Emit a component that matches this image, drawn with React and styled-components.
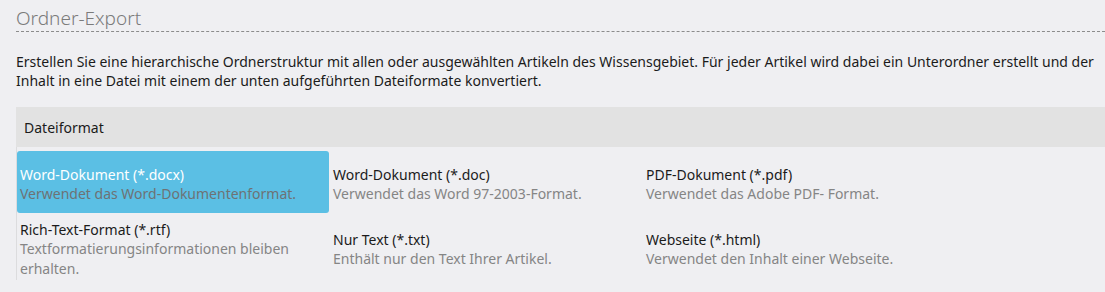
import React from "react";
import styled, { createGlobalStyle } from "styled-components";

const Global = createGlobalStyle`
  html, body { margin: 0; padding: 0; background: #efeff2; }
  body { font-family: "Noto Sans", "Open Sans", sans-serif; }
`;

const Page = styled.div`
  padding: 6px 0 0 16px;
  width: 1089px;
`;

const Title = styled.h1`
  margin: 0;
  font-size: 19px;
  font-weight: 300;
  color: #7b7b7b;
  line-height: 24px;
  padding-bottom: 1px;
  border-bottom: 1px dashed #8c8c8c;
`;

const Intro = styled.p`
  margin: 20px 0 17px;
  font-size: 14px;
  line-height: 19px;
  color: #1b1b1b;
  padding-right: 4px;
`;

const SectionHeader = styled.div`
  height: 40px;
  display: flex;
  align-items: center;
  padding-left: 8px;
  background: #e2e2e2;
  font-size: 14px;
  color: #1b1b1b;
`;

const Options = styled.div`
  border-left: 1px solid #dcdcde;
  padding-top: 4px;
  display: grid;
  grid-template-columns: repeat(3, 312px);
  column-gap: 1px;
  row-gap: 1px;
`;

const Option = styled.div`
  min-height: 62px;
  box-sizing: border-box;
  padding: 6px 3px 2px;
  display: flex;
  flex-direction: column;
  justify-content: center;
  border-radius: 3px;
  background: ${(p) => (p.$selected ? "#5bbfe4" : "transparent")};
`;

const OptionName = styled.div`
  font-size: 14px;
  line-height: 19px;
  color: ${(p) => (p.$selected ? "#ffffff" : "#1b1b1b")};
`;

const OptionDesc = styled.div`
  font-size: 14px;
  line-height: 19.5px;
  color: ${(p) => (p.$selected ? "#6e7275" : "#858585")};
  padding-right: 20px;
`;

const formats = [
  { name: "Word-Dokument (*.docx)", desc: "Verwendet das Word-Dokumentenformat.", selected: true },
  { name: "Word-Dokument (*.doc)", desc: "Verwendet das Word 97-2003-Format." },
  { name: "PDF-Dokument (*.pdf)", desc: "Verwendet das Adobe PDF- Format." },
  { name: "Rich-Text-Format (*.rtf)", desc: "Textformatierungsinformationen bleiben erhalten." },
  { name: "Nur Text (*.txt)", desc: "Enthält nur den Text Ihrer Artikel." },
  { name: "Webseite (*.html)", desc: "Verwendet den Inhalt einer Webseite." },
];

export default function App() {
  return (
    <>
      <Global />
      <Page>
        <Title>Ordner-Export</Title>
        <Intro>
          Erstellen Sie eine hierarchische Ordnerstruktur mit allen oder ausgewählten Artikeln des
          Wissensgebiet. Für jeder Artikel wird dabei ein Unterordner erstellt und der Inhalt in eine
          Datei mit einem der unten aufgeführten Dateiformate konvertiert.
        </Intro>
        <SectionHeader>Dateiformat</SectionHeader>
        <Options>
          {formats.map((f) => (
            <Option key={f.name} $selected={f.selected}>
              <OptionName $selected={f.selected}>{f.name}</OptionName>
              <OptionDesc $selected={f.selected}>{f.desc}</OptionDesc>
            </Option>
          ))}
        </Options>
      </Page>
    </>
  );
}
